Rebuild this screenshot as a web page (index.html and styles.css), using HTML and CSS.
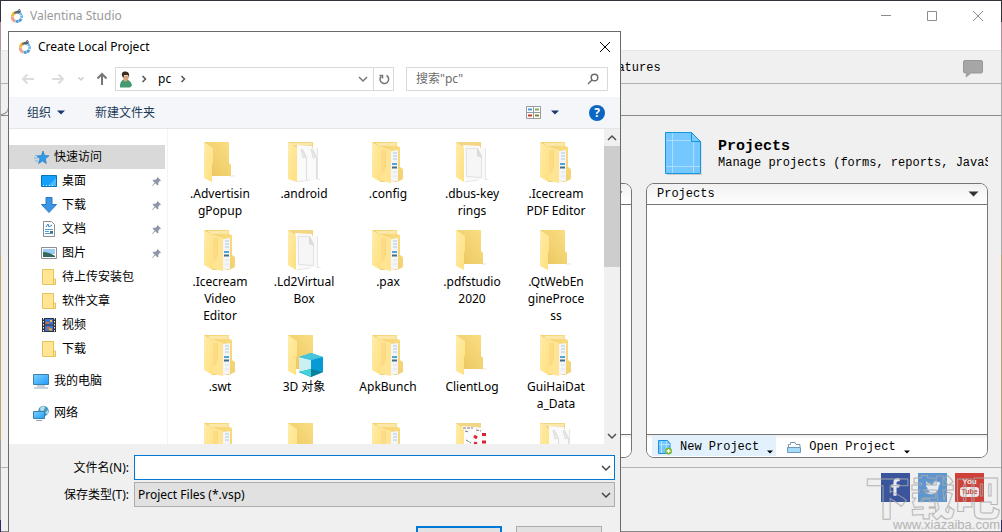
FILE: index.html
```html
<!DOCTYPE html>
<html lang="zh-CN">
<head>
<meta charset="utf-8">
<title>Valentina Studio</title>
<link rel="stylesheet" href="styles.css">
</head>
<body>
<svg class="defs" aria-hidden="true">
  <defs>
    <linearGradient id="flap" x1="0" x2="1" y1="0" y2="1"><stop offset="0" stop-color="#ffedab"/><stop offset="1" stop-color="#ffdf7e"/></linearGradient>
    <linearGradient id="back" x1="0" x2="1" y1="1" y2="0"><stop offset="0" stop-color="#e9c45c"/><stop offset="1" stop-color="#fbdf85"/></linearGradient>
    <linearGradient id="screen" x1="0" x2="1" y1="0" y2="1"><stop offset="0" stop-color="#7fd0ff"/><stop offset="1" stop-color="#1f9dfb"/></linearGradient>
  </defs>
  <symbol id="logo" viewBox="0 0 14 14">
    <g fill="none" stroke-width="2.8">
      <path d="M7 3.400A4.400 4.400 0 0 1 10.800 10.400" stroke="#6cb9ea" stroke-dasharray="2.400 .5"/>
      <path d="M10.800 10.400A4.800 4.800 0 0 1 5 12" stroke="#4a97d2" stroke-dasharray="2.400 .5"/>
      <path d="M5 12A4.600 4.600 0 0 1 2.200 7.500" stroke="#f0a08a"/>
      <path d="M2.200 7.500A4.600 4.600 0 0 1 6 3.500" stroke="#f4b942"/>
    </g>
    <path d="M3.500 4.600C5 2 7 1.600 11 1.200L10.500 3.600C8 5 5 4 3.500 4.600Z" fill="#53636f"/><path d="M8 1.500l2-1.500" stroke="#53636f"/>
  </symbol>
  <symbol id="pin" viewBox="0 0 12 12"><path d="M7 1l4 4-1.400.5-1.600 1.700.2 2.300-1 .8-2.500-2.500L1.500 11 1 10.500l3-3.200L1.700 5l.8-1 2.300.2 1.800-1.700z" fill="#8b98a3"/></symbol>
  <symbol id="minifolder" viewBox="0 0 14 16"><path d="M.5.5h11v9.500h2v5.500H.5z" fill="#ffe594" stroke="#e8c458"/><path d="M11.500 10v5" stroke="#e8c458"/></symbol>
  <symbol id="chevron" viewBox="0 0 10 10"><path d="M1 3l4 4 4-4" fill="none" stroke="currentColor" stroke-width="1.500"/></symbol>
  <symbol id="caret" viewBox="0 0 10 6"><path d="M0 .5h10L5 5.500z" fill="currentColor"/></symbol>
  <symbol id="f-empty" viewBox="0 0 36 42">
    <path d="M27 34l4-1 3 1-4 1z" fill="#eee"/>
    <path d="M2 0h25v21l2 2v11H10z" fill="url(#back)"/>
    <path d="M2 0l9 6v15l-1 1v18L2 36z" fill="url(#flap)"/>
  </symbol>
  <symbol id="f-docs" viewBox="0 0 36 42">
    <path d="M2 0h25v10H2z" fill="#f3d684"/>
    <path d="M4 1h22v2H6z" fill="#fbe7a8"/>
    <path d="M11 3l15 1v2h6v31l-8 1-13 2z" fill="#fafafb"/>
    <path d="M20.500 39V16l-4-9M30.500 37V15l-4-8" fill="none" stroke="#dedede"/>
    <path d="M31.500 6v31M11 40l13-2" fill="none" stroke="#e6e6e6"/>
    <path d="M15 7l5 8-3 1zM25 7l5 8-3 1z" fill="#ececec" stroke="#d2d2d2" stroke-width=".6"/>
    <path d="M32 37l4 0-5 1z" fill="#ddd"/>
    <path d="M2 0l9 6v34L2 37z" fill="url(#flap)"/>
  </symbol>
  <symbol id="f-page" viewBox="0 0 36 42">
    <path d="M2 0h25v10H2z" fill="#f3d684"/>
    <path d="M9 3l17 1v2h6v31l-8 1-12 2z" fill="#f9f9fa"/>
    <path d="M31.500 6v31M11 40l13-2" fill="none" stroke="#e6e6e6"/>
    <path d="M12.500 6.500h11l4 8v21l-15-1z" fill="#f6f6f6" stroke="#d9d9d9" stroke-width=".7"/><path d="M23.500 7v7l4 1z" fill="#e0e0e0" stroke="#ccc" stroke-width=".6"/>
    <path d="M32 37l4 1h-6z" fill="#ddd"/>
    <path d="M2 0l8 6v34L2 35z" fill="url(#flap)"/>
  </symbol>
  <symbol id="f-red" viewBox="0 0 36 42">
    <path d="M2 0h25v5H2z" fill="#f3d684"/><path d="M8 3l24 2v34H10z" fill="#fcfcfd"/>
    <path d="M9 5l10 0M11 8l4 1M22 7l5 1M12 17l5 3" stroke="#777" stroke-dasharray="3 1"/>
    <path d="M20 13l3 2M28 11.500h4M28 19h4M20 20l3 1" stroke="#e02030" stroke-width="3"/>
    <path d="M2 0l8 6v34L2 35z" fill="url(#flap)"/>
  </symbol>
  <symbol id="f-stripe" viewBox="0 0 36 42">
    <path d="M2 0h25v4l3 1v20l3 2v10l-6 3H10z" fill="url(#back)"/>
    <path d="M6 1h20v3H8z" fill="#fbe7a8"/>
    <path d="M21 9l7-1v31l-7 1z" fill="#f3f5f7"/>
    <path d="M23 11h4M23 14h4M23 17h4" stroke="#a9cbe6"/><path d="M22 22h5" stroke="#4ea6dc" stroke-width="2"/><path d="M22 25.500h5" stroke="#3e6f8a" stroke-width="2"/><path d="M23 30h4M23 34h4" stroke="#dbe2e7"/>
    <path d="M2 0l9 6v34l-9-5z" fill="url(#flap)"/>
    <path d="M10 4l11 4v33l-10-2z" fill="#ffe493"/><path d="M11 8h5v18l-3 5-2 0z" fill="#fbdc84"/>
  </symbol>
</svg>

<div class="app">
  <header class="titlebar">
    <svg class="i14"><use href="#logo"/></svg>
    <h1>Valentina Studio</h1>
    <div class="winbtns">
      <button aria-label="最小化"><svg viewBox="0 0 12 12"><path d="M1 5.500h10"/></svg></button>
      <button aria-label="最大化"><svg viewBox="0 0 12 12"><path d="M1.500 1.500h9v9h-9z"/></svg></button>
      <button aria-label="关闭"><svg viewBox="0 0 12 12"><path d="M1 1l10 10M11 1L1 11"/></svg></button>
    </div>
  </header>
  <div class="menu"></div>
  <nav class="toolbar">
    <a href="#features">Features</a>
    <button class="chat" aria-label="反馈"><svg viewBox="0 0 20 17"><path d="M2 .5h16q1.500 0 1.500 1.500v9.500q0 1.500-1.500 1.500H8l-5 4 1-4H2q-1.500 0-1.500-1.500V2Q.5.5 2 .5z" fill="#a6a6a6" stroke="#979797"/></svg></button>
  </nav>
  <div class="tabs"><span class="tab"></span></div>
  <main class="content">
    <section class="group middle">
      <div class="group-head"></div>
      <div class="card">
        <div class="card-title"><span></span><svg class="tri"><use href="#caret"/></svg></div>
        <div class="card-body"></div>
        <div class="card-foot"></div>
      </div>
    </section>
    <section class="group">
      <div class="group-head">
        <svg class="blueprint" viewBox="0 0 37 43">
          <path d="M2 42.500h35V10" fill="none" stroke="#ccc"/>
          <path d="M.5.5h26l9 9v32H.5z" fill="#74c8ff" stroke="#1496e0"/>
          <path d="M7.500 1v40M28.500 10v31M1 8.500h26M1 34.500h34" stroke="#a9deff"/>
          <path d="M26.500.5v9h9z" fill="#7accff" stroke="#1496e0"/>
        </svg>
        <div class="group-text"><h2>Projects</h2><p>Manage projects (forms, reports, JavaScript)</p></div>
      </div>
      <div class="card">
        <div class="card-title"><span>Projects</span><svg class="tri"><use href="#caret"/></svg></div>
        <div class="card-body"></div>
        <div class="card-foot">
          <button class="act on">
            <svg viewBox="0 0 14 15"><path d="M.5.500h9l2.500 3v10H.5z" fill="#74c8ff" stroke="#1c91dd"/><path d="M3.500 1v12M8.500 1v12M1 4.500h11" stroke="#b3e2ff"/><circle cx="10.500" cy="11" r="3.500" fill="#7cb832"/><path d="M8.500 11h4M10.500 9v4" stroke="#fff" stroke-width="1.300"/></svg>
            New Project<svg class="more"><use href="#caret"/></svg>
          </button>
          <button class="act">
            <svg viewBox="0 0 14 13"><path d="M1.500 6V3.500h2v-2H8l1 2h4V6" fill="#fff" stroke="#7799b0"/><path d="M.5 6.500h13v5H.5z" fill="#a5dcfa" stroke="#6e9ab8"/></svg>
            Open Project<svg class="more"><use href="#caret"/></svg>
          </button>
        </div>
      </div>
    </section>
  </main>
  <footer class="social">
    <a href="#facebook" class="fb" aria-label="Facebook"><svg viewBox="0 0 28 28"><path d="M12 22v-8h-2v-3h2V9q0-4 4-4h2v3h-1.500q-1.500 0-1.500 1.500V11h3l-.5 3H15v8z" fill="#e8eaf0"/></svg></a>
    <a href="#twitter" class="tw" aria-label="Twitter"><svg viewBox="0 0 28 28"><path d="M8 8q3 3.500 6.500 3.500C14 8 17.500 7 19.500 9l2-.8-1 2 1.500-.2-2 2C20 18 16 20.500 12.500 20.500q-3 0-5-1.500 3 0 4-1.500-2.500-.5-3-2.500h1.500Q7.500 13.500 7.500 11.500l1.500.5Q7 10 8 8z" fill="#e8edf3"/></svg></a>
    <a href="#youtube" class="yt" aria-label="YouTube"><span>You</span><b>Tube</b></a>
    <div class="mark"><strong>下载吧</strong><span>www.xiazaiba.com</span></div>
  </footer>
</div>

<div class="dialog" role="dialog" aria-labelledby="dlg">
  <header class="dlg-title">
    <svg class="i14"><use href="#logo"/></svg>
    <h2 id="dlg">Create Local Project</h2>
    <button aria-label="关闭"><svg viewBox="0 0 12 12"><path d="M1 1l10 10M11 1L1 11" stroke="#000"/></svg></button>
  </header>
  <div class="navrow">
    <button aria-label="后退"><svg viewBox="0 0 14 14"><path d="M13 7H2M6.500 2.500L2 7l4.500 4.500" stroke="#dcdcdc"/></svg></button>
    <button class="fwd" aria-label="前进"><svg viewBox="0 0 14 14"><path d="M1 7h11M7.500 2.500L12 7l-4.500 4.500" stroke="#dcdcdc"/></svg></button>
    <button class="small" aria-label="最近位置"><svg viewBox="0 0 14 14"><path d="M4 5l3 3 3-3" stroke="#d4d4d4"/></svg></button>
    <button class="up" aria-label="上移"><svg viewBox="0 0 14 14"><path d="M7 13V2M2.500 6.500L7 2l4.500 4.500" stroke="#777"/></svg></button>
    <div class="address">
      <svg class="user" viewBox="0 0 13 17"><path d="M.5 16.500q-.5-6 3.500-8l4 0q4 2 4.500 6l-2 2z" fill="#459a73"/><path d="M3.500 4.500h5.500v3l-2 3h-2.500z" fill="#d9a37c"/><path d="M2.500 5Q1.500.5 5.500.5 10.500 0 9.500 6.500l-1-2.500-4 0-.5 3z" fill="#3a2b25"/></svg>
      <svg class="sep" viewBox="0 0 10 10"><path d="M3.500 2l3 3-3 3" /></svg>
      <button class="crumb">pc</button>
      <svg class="sep" viewBox="0 0 10 10"><path d="M3.500 2l3 3-3 3"/></svg>
      <button class="drop" aria-label="历史"><svg><use href="#chevron"/></svg></button>
      <button class="refresh" aria-label="刷新"><svg viewBox="0 0 12 12"><path d="M8.500 2.500A4.300 4.300 0 1 1 3 3.500M1.500 2.500h3v3" fill="none" stroke="#777" stroke-width="1.500"/></svg></button>
    </div>
    <div class="search">
      <input type="search" aria-label="搜索" placeholder='搜索"pc"'>
      <svg viewBox="0 0 12 12"><circle cx="7.500" cy="4.500" r="3.300"/><path d="M5 7L1 11"/></svg>
    </div>
  </div>
  <div class="commands">
    <button>组织 <svg class="tri8"><use href="#caret"/></svg></button>
    <button>新建文件夹</button>
    <button class="view" aria-label="视图"><svg class="viewicon" viewBox="0 0 15 13"><path d="M.5.5h14v12H.5zM7.500.5v12M.5 6.500h14" fill="#fff" stroke="#999"/><path d="M2 3.500h4" stroke="#4a9ad2" stroke-width="2"/><path d="M9 3.500h4" stroke="#7ba96a" stroke-width="2"/><path d="M2 9.500h4" stroke="#cb3a20" stroke-width="2"/><path d="M9 9.500h4" stroke="#7d8626" stroke-width="2"/></svg><svg class="tri8"><use href="#caret"/></svg></button>
    <button class="help" aria-label="帮助">?</button>
  </div>
  <div class="browser">
    <ul class="places">
      <li class="top on"><svg viewBox="0 0 16 16"><path d="M9 2l1.500 4.500 4.500.3-3.700 3 1 4.700L8.500 12l-4 2.500L6 9.800 3 7l4.500-.5z" fill="#2f9bea" stroke="#1670b5" stroke-width=".6"/><path d="M1 6.500h3M0 9h4M1 12h3" stroke="#6db9ed"/></svg>快速访问</li>
      <li><svg viewBox="0 0 16 16"><path d="M.5 2.500h15v11H.5z" fill="#12a0fb" stroke="#0871bd"/><path d="M7 13L15 5v8z" fill="#49b8ff"/><path d="M2 12.500h12" stroke="#d6f0ff" stroke-dasharray="1 2"/></svg>桌面<svg class="pin"><use href="#pin"/></svg></li>
      <li><svg viewBox="0 0 16 16"><path d="M5 .5h6v7h4.500L8 15.500.5 7.500H5z" fill="#3b94e4" stroke="#2b78c4"/></svg>下载<svg class="pin"><use href="#pin"/></svg></li>
      <li><svg viewBox="0 0 16 16"><path d="M2.500.5h8l3 3v12h-11z" fill="#fff" stroke="#8c8c8c"/><path d="M4 8.500h8M4 10.500h4M4 12.500h8" stroke="#4c9ed8"/><path d="M5 6l2-3 1 3 3-2" fill="none" stroke="#358bc9"/><path d="M9 10h3v2H9z" fill="#567"/></svg>文档<svg class="pin"><use href="#pin"/></svg></li>
      <li><svg viewBox="0 0 16 16"><path d="M.5 2.500h15v11H.5z" fill="#fff" stroke="#8f8f8f"/><path d="M2 4h12v5H2z" fill="#9bcdf4"/><path d="M2 7q6 0 12 4v1H2z" fill="#34685f"/></svg>图片<svg class="pin"><use href="#pin"/></svg></li>
      <li><svg><use href="#minifolder"/></svg>待上传安装包</li>
      <li><svg><use href="#minifolder"/></svg>软件文章</li>
      <li><svg viewBox="0 0 16 16"><path d="M1 1h14v14H1z" fill="#333"/><path d="M2.500 1v14M13.500 1v14" stroke="#eee" stroke-dasharray="1.500 1.500"/><path d="M4 2h8v5.500H4zM4 8.500h8V14H4z" fill="#3f74d6"/><path d="M5 6h3M6 11h3" stroke="#df6a38" stroke-width="2"/><path d="M9 4h2M8 12.500h3" stroke="#e3bd32" stroke-width="2"/></svg>视频</li>
      <li><svg><use href="#minifolder"/></svg>下载</li>
      <li class="top gap"><svg viewBox="0 0 16 16"><path d="M.5 1.500h15v10H.5z" fill="url(#screen)" stroke="#3a7fae"/><path d="M4 13h8M1 15h14" stroke="#8fa5b5"/></svg>我的电脑</li>
      <li class="top gap"><svg viewBox="0 0 16 16"><circle cx="10.500" cy="6" r="5.300" fill="#4d9cc0"/><path d="M7 3q3-3 5-1l-1 3-3 2zM12 8l3-3v4z" fill="#b8dfe4"/><path d="M.5 6.500h11v7H.5z" fill="url(#screen)" stroke="#3a7fae"/><path d="M3 15.500h6" stroke="#8fa5b5"/></svg>网络</li>
    </ul>
    <ul class="files">
      <li><svg><use href="#f-empty"/></svg>.Advertisin<br>gPopup</li>
      <li><svg><use href="#f-docs"/></svg>.android</li>
      <li><svg><use href="#f-stripe"/></svg>.config</li>
      <li><svg><use href="#f-page"/></svg>.dbus-key<br>rings</li>
      <li><svg><use href="#f-stripe"/></svg>.Icecream<br>PDF Editor</li>
      <li><svg><use href="#f-stripe"/></svg>.Icecream<br>Video<br>Editor</li>
      <li><svg><use href="#f-page"/></svg>.Ld2Virtual<br>Box</li>
      <li><svg><use href="#f-stripe"/></svg>.pax</li>
      <li><svg><use href="#f-empty"/></svg>.pdfstudio<br>2020</li>
      <li><svg><use href="#f-empty"/></svg>.QtWebEn<br>gineProce<br>ss</li>
      <li><svg><use href="#f-stripe"/></svg>.swt</li>
      <li><svg viewBox="0 0 36 42"><use href="#f-empty" width="36" height="42"/><path d="M13 22l12-4 12 4v15l-12 5-12-5z" fill="#25b6d2"/><path d="M13 22l12 3v10l-12 3z" fill="#c9f0f3"/><path d="M25 25l12-3v15l-12-2z" fill="#079bd6"/><path d="M13 37l12-3 12 3-12 5z" fill="#087f9c"/><path d="M13 37l12-3v8z" fill="#43d1dc"/><path d="M13 22l12-4 12 4-12 3z" fill="#48c3dc"/></svg>3D 对象</li>
      <li><svg><use href="#f-stripe"/></svg>ApkBunch</li>
      <li><svg><use href="#f-empty"/></svg>ClientLog</li>
      <li><svg><use href="#f-stripe"/></svg>GuiHaiDat<br>a_Data</li>
      <li><svg><use href="#f-stripe"/></svg></li>
      <li><svg><use href="#f-empty"/></svg></li>
      <li><svg><use href="#f-stripe"/></svg></li>
      <li><svg><use href="#f-red"/></svg></li>
      <li><svg><use href="#f-docs"/></svg></li>
    </ul>
    <div class="scroll">
      <button class="flip" aria-label="向上滚动"><svg><use href="#chevron"/></svg></button>
      <div class="track"><div class="thumb"></div></div>
      <button aria-label="向下滚动"><svg><use href="#chevron"/></svg></button>
    </div>
  </div>
  <form class="save">
    <label for="fname">文件名(N):</label>
    <div class="field"><input id="fname" type="text"><svg><use href="#chevron"/></svg></div>
    <label for="ftype">保存类型(T):</label>
    <div class="field"><select id="ftype"><option>Project Files (*.vsp)</option></select><svg><use href="#chevron"/></svg></div>
    <div class="buttons"><button type="button" class="primary" aria-label="保存"></button><button type="button" aria-label="取消"></button></div>
  </form>
</div>
</body>
</html>
```

FILE: styles.css
```css
* { box-sizing: border-box; }
html, body { height: 100%; }
body {
  margin: 0;
  padding: 1px 1px 0;
  overflow: hidden;
  background: linear-gradient(#36323c 0 22px, #b58c9c 22px 50px, #aaa 50px 255px, #bba36d 255px 440px, #999 440px 520px, #2b2b6b 520px);
  font: 12px/16px "Noto Sans", "Noto Sans CJK SC", sans-serif;
  color: #000;
}
h1, h2, p, ul { margin: 0; padding: 0; font-weight: normal; }
ul { list-style: none; }
button {
  border: 0; padding: 0; background: none;
  font: inherit; color: inherit;
  display: inline-flex; align-items: center; justify-content: center;
}
svg { display: block; flex: none; }
.defs { position: absolute; width: 0; height: 0; }
.i14 { width: 14px; height: 14px; }

/* main window */
.app {
  height: 100%;
  display: flex; flex-direction: column;
  background: #f0f0f0;
  border-bottom: 1px solid #888;
  font-family: "Liberation Mono", "Noto Sans CJK SC", monospace;
}
.titlebar {
  height: 29px; padding-left: 9px;
  display: flex; align-items: center; gap: 6px;
  background: #fff; color: #999;
  font-family: "Noto Sans", sans-serif;
}
.titlebar h1 { flex: 1; font-size: 12px; }
.winbtns { display: flex; }
.winbtns button { width: 46px; height: 29px; }
.winbtns svg { width: 12px; height: 12px; fill: none; stroke: #8c8c8c; }
.menu { height: 21px; background: #fff; border-bottom: 1px solid #e6e6e6; }
.toolbar {
  height: 33px; padding: 2px 18px 0 602px;
  display: flex; align-items: center; justify-content: space-between;
  border-bottom: 1px solid #b0b0b0;
}
.toolbar a { color: #000; text-decoration: none; }
.chat svg { width: 20px; height: 17px; }
.tabs { height: 32px; border-bottom: 1px solid #8a8a8a; }
.tab { display: block; width: 8px; height: 31px; border: solid #8a8a8a; border-width: 0 1px 1px 0; border-radius: 0 0 8px 0; }
.content {
  flex: 1; min-height: 0;
  display: grid; grid-template-columns: 1fr 342px 342px; gap: 14px;
  padding: 16px 13px 9px 0;
  border-bottom: 1px solid #b5b5b5;
}
.group { display: flex; flex-direction: column; gap: 9px; min-width: 0; }
.middle { grid-column: 2; }
.group-head { height: 42px; padding-left: 19px; display: flex; align-items: center; gap: 16px; }
.blueprint { width: 37px; height: 43px; }
.group-text { min-width: 0; padding-top: 3px; }
.group-text h2 { font-size: 15px; font-weight: bold; }
.group-text p { overflow: hidden; white-space: nowrap; }
.card {
  flex: 1; min-height: 0;
  display: flex; flex-direction: column;
  border: 1px solid #767676; border-radius: 8px;
  background: #fff; overflow: hidden;
}
.card-title {
  height: 21px; padding: 0 8px 0 10px;
  display: flex; align-items: center; justify-content: space-between;
  border-bottom: 1px solid #767676;
  background: linear-gradient(#f1f1f1, #fff);
}
.tri { width: 11px; height: 6px; color: #333; }
.card-body { flex: 1; }
.card-foot {
  height: 23px; padding-left: 5px;
  display: flex; gap: 5px;
  border-top: 1px solid #767676;
  background: linear-gradient(#eee, #fff 4px);
}
.act { gap: 8px; padding: 3px 3px 0 6px; height: 21px; }
.act.on { background: #e3f1fd; }
.act > svg { width: 14px; height: 15px; }
.act > .more { width: 6px; height: 4px; align-self: flex-end; margin-bottom: 2px; }
.social {
  position: relative;
  height: 63px; padding: 5px 17px 0 0;
  display: flex; justify-content: flex-end; gap: 8px;
}
.social a { width: 29px; height: 29px; color: #f2e8e8; text-decoration: none; }
.fb { background: #3a559b; }
.tw { background: #6096cf; }
.yt { background: #cf4038; text-align: center; font: bold 8px/10px "Liberation Sans", sans-serif; padding-top: 4px; }
.yt span, .yt b { display: block; }
.yt b { margin: 0 5px; border-radius: 3px; background: #f2e8e8; color: #c8382f; font-size: 7px; }
.mark { position: absolute; right: 1px; bottom: 0; text-align: right; opacity: .8; }
.mark strong {
  display: block; font: 900 45px/46px "Noto Sans CJK SC", sans-serif;
  color: transparent; -webkit-text-stroke: 1px #aaa;
}
.mark span { display: block; font: 13px/12px "Liberation Sans", sans-serif; color: #a5a5a5; text-align: right; }

/* save dialog */
.dialog {
  position: absolute; left: 8px; top: 31px;
  width: 613px;
  background: #fff; border: 1px solid #6a6a6a;
}
.dlg-title { height: 29px; padding: 0 9px; display: flex; align-items: center; gap: 6px; }
.dlg-title h2 { flex: 1; font-size: 12px; }
.dlg-title svg { fill: none; }
.dlg-title button svg { width: 12px; height: 12px; }
.navrow { display: flex; align-items: center; height: 36px; padding: 6px 12px 6px 12px; }
.navrow > button svg { width: 14px; height: 14px; fill: none; stroke-width: 2; }
.navrow > .fwd { margin-left: 16px; }
.navrow > .small { margin-left: 10px; }
.navrow > .small svg { width: 12px; }
.navrow > .up { margin: 0 6px 0 8px; }
.address {
  flex: 1; height: 24px; display: flex; align-items: center;
  border: 1px solid #d9d9d9; padding-left: 3px;
}
.user { width: 14px; height: 17px; margin-right: 6px; }
.sep { width: 10px; height: 10px; fill: none; stroke: #555; stroke-width: 1.5; }
.crumb { margin: 0 7px 0 9px; }
.drop { margin-left: auto; width: 20px; }
.drop svg { width: 10px; height: 10px; color: #777; }
.refresh { width: 20px; height: 22px; border-left: 1px solid #d9d9d9; }
.refresh svg { width: 12px; height: 12px; }
.search {
  width: 202px; height: 24px; margin-left: 12px; padding: 0 8px 0 9px;
  display: flex; align-items: center;
  border: 1px solid #d9d9d9;
}
.search input { flex: 1; min-width: 0; border: 0; padding: 0; outline: 0; font: inherit; background: none; }
.search input::placeholder { color: #6d6d6d; }
.search svg { width: 12px; height: 12px; fill: none; stroke: #6d6d6d; stroke-width: 1.5; }
.commands {
  height: 32px; padding: 0 15px 0 18px;
  display: flex; align-items: center; gap: 30px;
  background: #f4f6f9; border-bottom: 1px solid #e6e6e6;
  color: #1e395b;
}
.commands button { gap: 6px; }
.tri8 { width: 8px; height: 5px; color: #17386c; }
.commands .view { margin-left: auto; gap: 10px; }
.viewicon { width: 15px; height: 13px; }
.commands .help {
  width: 16px; height: 16px; border-radius: 50%;
  background: #0a66c2; color: #fff; font-weight: bold;
}
.browser { display: flex; height: 315px; }
.places { width: 159px; padding-top: 16px; border-right: 1px solid #f3f3f3; }
.places li { height: 24px; margin-right: 2px; padding: 0 3px 0 32px; display: flex; align-items: center; gap: 5px; }
.places li svg { width: 16px; height: 16px; }
.places .pin { width: 11px; height: 11px; margin-left: auto; }
.places .top { padding-left: 24px; }
.places .on { background: #d9d9d9; padding-left: 25px; gap: 4px; }
.places .gap { margin-top: 8px; }
.files {
  flex: 1; overflow: hidden; padding: 13px 0 0 10px;
  display: grid; grid-template-columns: repeat(auto-fill, 84px); align-content: start; row-gap: 11px;
}
.files li { text-align: center; line-height: 17px; }
.files svg { width: 36px; height: 42px; margin: 0 auto 1px; overflow: visible; }
.scroll { width: 16px; display: flex; flex-direction: column; background: #f0f0f0; }
.scroll button { height: 17px; color: #505050; }
.scroll svg { width: 10px; height: 10px; stroke-width: 2; }
.flip svg { transform: rotate(180deg); }
.track { flex: 1; }
.thumb { height: 43%; background: #cdcdcd; }
.save {
  display: grid; grid-template-columns: 120px 1fr; column-gap: 5px; row-gap: 2px; align-items: center;
  padding: 11px 5px 20px 0; background: #f0f0f0;
}
.save label { text-align: right; }
.field { display: grid; align-items: center; }
.field > * { grid-area: 1 / 1; }
.field input, .field select {
  width: 100%; height: 25px; padding: 0 24px 0 3px;
  font: inherit; color: #000; border-radius: 0; outline: 0;
  appearance: none;
}
.field input { border: 1px solid #0078d7; background: #fff; }
.field select { border: 1px solid #adadad; background: #e1e1e1; }
.field svg { width: 10px; height: 10px; margin-right: 4px; justify-self: end; color: #444; pointer-events: none; }
.buttons { grid-column: 1 / 3; display: flex; justify-content: flex-end; gap: 14px; padding: 17px 13px 0 0; }
.buttons button { width: 86px; height: 24px; background: #e1e1e1; border: 1px solid #adadad; }
.buttons .primary { border: 2px solid #0078d7; }
```
